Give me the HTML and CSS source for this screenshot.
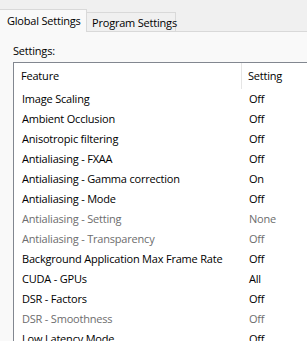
FILE: index.html
```html
<!DOCTYPE html>
<html lang="en">
  <head>
    <meta charset="UTF-8" />
    <title>Manage 3D Settings</title>
    <link rel="stylesheet" href="styles.css">
  </head>
  <body>
    <div class="tabstrip">
      <div class="tab active">Global Settings</div>
      <div class="tab">Program Settings</div>
      <div class="tab-fill"></div>
    </div>
    <div class="panel">
      <div class="label">Settings:</div>
      <div class="list">
        <div class="row header">
          <div class="feature">Feature</div>
          <div class="setting">Setting</div>
        </div>
        <div class="row"><div class="feature">Image Scaling</div><div class="setting">Off</div></div>
        <div class="row"><div class="feature">Ambient Occlusion</div><div class="setting">Off</div></div>
        <div class="row"><div class="feature">Anisotropic filtering</div><div class="setting">Off</div></div>
        <div class="row"><div class="feature">Antialiasing - FXAA</div><div class="setting">Off</div></div>
        <div class="row"><div class="feature">Antialiasing - Gamma correction</div><div class="setting">On</div></div>
        <div class="row"><div class="feature">Antialiasing - Mode</div><div class="setting">Off</div></div>
        <div class="row disabled"><div class="feature">Antialiasing - Setting</div><div class="setting">None</div></div>
        <div class="row disabled"><div class="feature">Antialiasing - Transparency</div><div class="setting">Off</div></div>
        <div class="row"><div class="feature">Background Application Max Frame Rate</div><div class="setting">Off</div></div>
        <div class="row"><div class="feature">CUDA - GPUs</div><div class="setting">All</div></div>
        <div class="row"><div class="feature">DSR - Factors</div><div class="setting">Off</div></div>
        <div class="row disabled"><div class="feature">DSR - Smoothness</div><div class="setting">Off</div></div>
        <div class="row"><div class="feature">Low Latency Mode</div><div class="setting">Off</div></div>
      </div>
    </div>
  </body>
</html>
```

FILE: styles.css
```css
body {
  margin: 0;
  width: 307px;
  height: 341px;
  overflow: hidden;
  font-family: "Open Sans", "Noto Sans", sans-serif;
  font-size: 11px;
  letter-spacing: -0.2px;
  color: #000;
  background: #f9f9f9;
}

.tabstrip {
  display: flex;
  align-items: flex-end;
  height: 32px;
  background: #f0f0f0;
}

.tab {
  height: 18px;
  line-height: 19px;
  padding: 0 5px;
  width: 78px;
  background: #f0f0f0;
  border: 1px solid #d9d9d9;
  border-left: none;
  white-space: nowrap;
}

.tab.active {
  height: 22px;
  line-height: 21px;
  width: 79px;
  padding: 0 0 0 7px;
  background: #f9f9f9;
  border-bottom: none;
  position: relative;
  z-index: 1;
}

.tab-fill {
  flex: 1;
  border-bottom: 1px solid #d9d9d9;
}

.panel {
  padding: 11px 0 0 13px;
}

.label {
  height: 19px;
}

.list {
  width: 320px;
  height: 300px;
  background: #fff;
  border: 1px solid #828790;
  border-right: none;
}

.row {
  display: flex;
  height: 20px;
  line-height: 20px;
}

.row.header {
  height: 26px;
  line-height: 26px;
}

.feature {
  width: 220px;
  padding-left: 8px;
  white-space: nowrap;
}

.header .feature {
  padding-left: 7px;
  border-right: 1px solid #e5e5e5;
  margin-right: -1px;
}

.setting {
  padding-left: 7px;
}

.disabled {
  color: #6d6d6d;
}
```
